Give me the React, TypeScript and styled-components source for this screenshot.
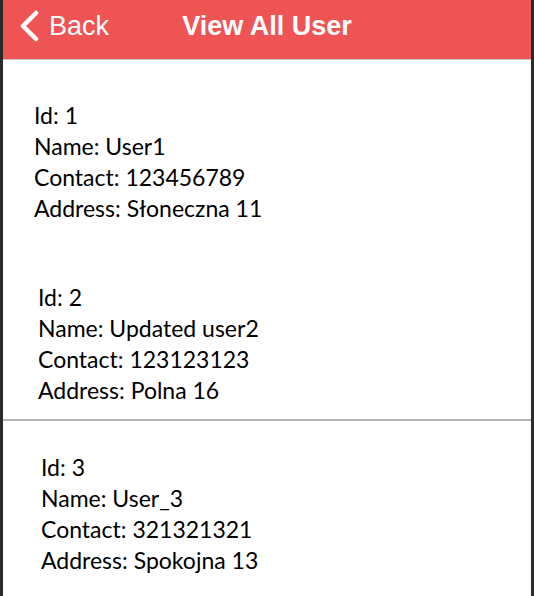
import React from "react";
import styled, { createGlobalStyle } from "styled-components";

const GlobalStyle = createGlobalStyle`
  html, body {
    margin: 0;
    padding: 0;
    background-color: #2a2a2a;
  }
`;

const Screen = styled.div`
  margin-left: 3px;
  width: 528px;
  height: 596px;
  background-color: #ffffff;
  overflow: hidden;
  display: flex;
  flex-direction: column;
`;

const Header = styled.header`
  position: relative;
  height: 60px;
  box-sizing: border-box;
  padding-bottom: 7px;
  background-color: #ef5455;
  border-bottom: 1.5px solid #c9c9c9;
  display: flex;
  align-items: center;
  color: #ffffff;
  font-family: "Liberation Sans", Arial, sans-serif;
  flex-shrink: 0;
`;

const BackButton = styled.div`
  display: flex;
  align-items: center;
  gap: 9px;
  padding-left: 15px;
  font-size: 27px;
`;

const Title = styled.div`
  position: absolute;
  left: 0;
  right: 0;
  text-align: center;
  font-size: 27px;
  font-weight: bold;
  pointer-events: none;
`;

const Card = styled.div<{ $left: number; $top: number; $bottom: number; $divider?: boolean }>`
  padding: ${(p) => p.$top}px 0 ${(p) => p.$bottom}px ${(p) => p.$left}px;
  border-bottom: ${(p) => (p.$divider ? "2px solid #b5b5b5" : "none")};
  font-family: Lato, "Open Sans", sans-serif;
  font-size: 23px;
  color: #000000;
`;

const Line = styled.div`
  height: 31px;
  line-height: 31px;
`;

type User = { id: number; name: string; contact: string; address: string };

const users: User[] = [
  { id: 1, name: "User1", contact: "123456789", address: "Słoneczna 11" },
  { id: 2, name: "Updated user2", contact: "123123123", address: "Polna 16" },
  { id: 3, name: "User_3", contact: "321321321", address: "Spokojna 13" },
];

const layout = [
  { left: 31, top: 40, bottom: 38, divider: false },
  { left: 35, top: 20, bottom: 13, divider: true },
  { left: 38, top: 31, bottom: 20, divider: false },
];

export default function App() {
  return (
    <>
      <GlobalStyle />
      <Screen>
        <Header>
          <BackButton>
            <svg width="22" height="32" viewBox="0 0 22 32">
              <path
                d="M18 3 L5 16 L18 29"
                fill="none"
                stroke="#ffffff"
                strokeWidth="4.5"
                strokeLinecap="round"
                strokeLinejoin="round"
              />
            </svg>
            Back
          </BackButton>
          <Title>View All User</Title>
        </Header>
        {users.map((u, i) => (
          <Card
            key={u.id}
            $left={layout[i].left}
            $top={layout[i].top}
            $bottom={layout[i].bottom}
            $divider={layout[i].divider}
          >
            <Line>Id: {u.id}</Line>
            <Line>Name: {u.name}</Line>
            <Line>Contact: {u.contact}</Line>
            <Line>Address: {u.address}</Line>
          </Card>
        ))}
      </Screen>
    </>
  );
}
